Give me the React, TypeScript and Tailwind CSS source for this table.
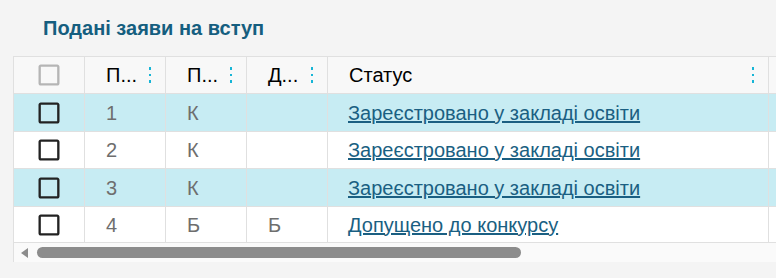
const rows = [
  { n: "1", a: "К", b: "", status: "Зареєстровано у закладі освіти", hl: true, h: "h-[38px]" },
  { n: "2", a: "К", b: "", status: "Зареєстровано у закладі освіти", hl: false, h: "h-[37px]" },
  { n: "3", a: "К", b: "", status: "Зареєстровано у закладі освіти", hl: true, h: "h-[38px]" },
  { n: "4", a: "Б", b: "Б", status: "Допущено до конкурсу", hl: false, h: "h-[36px]" },
];

const cols = "grid grid-cols-[71px_81px_81px_81px_441px_200px]";

const Checkbox = ({ muted }: { muted?: boolean }) => (
  <svg width="28" height="28" viewBox="0 0 24 24" className={muted ? "text-[#b5b5b5]" : "text-[#222222]"}>
    <path
      fill="currentColor"
      d="M19 5v14H5V5h14m0-2H5c-1.11 0-2 .9-2 2v14c0 1.1.89 2 2 2h14c1.1 0 2-.9 2-2V5c0-1.1-.9-2-2-2z"
    />
  </svg>
);

const Kebab = () => (
  <span className="flex flex-col gap-[4px]">
    <span className="w-[2.5px] h-[2.5px] bg-[#17b5d6]" />
    <span className="w-[2.5px] h-[2.5px] bg-[#17b5d6]" />
    <span className="w-[2.5px] h-[2.5px] bg-[#17b5d6]" />
  </span>
);

const HeadCell = ({ label }: { label: string }) => (
  <div className="flex items-center justify-between pl-[21px] pr-[14px] border-r border-[#e0e0e0]">
    <span className="text-black">{label}</span>
    <Kebab />
  </div>
);

export default function App() {
  return (
    <div className="w-[776px] h-[278px] overflow-hidden bg-[#f4f4f4] font-['Liberation_Sans',Arial,sans-serif] text-[20px]">
      <h2 className="mt-[17px] ml-[43px] h-[22px] leading-[22px] text-[20px] font-bold text-[#155e7f]">
        Подані заяви на вступ
      </h2>
      <div className="mt-[17px] ml-[13px] w-[763px] overflow-hidden border-l border-t border-[#e0e0e0]">
        <div className={`${cols} h-[37px] bg-[#f8f8f8] border-b border-[#e0e0e0]`}>
          <div className="flex items-center justify-center border-r border-[#e0e0e0]">
            <Checkbox muted />
          </div>
          <HeadCell label="П..." />
          <HeadCell label="П..." />
          <HeadCell label="Д..." />
          <HeadCell label="Статус" />
          <div className="border-r border-[#e0e0e0]" />
        </div>
        {rows.map((r) => (
          <div
            key={r.n}
            className={`${cols} ${r.h} border-b border-[#e0e0e0] ${r.hl ? "bg-[#c7ecf3]" : "bg-white"}`}
          >
            <div className="flex items-center justify-center border-r border-[#e0e0e0]">
              <Checkbox />
            </div>
            <div className="flex items-center pl-[21px] border-r border-[#e0e0e0] text-[#6e6e6e]">{r.n}</div>
            <div className="flex items-center pl-[21px] border-r border-[#e0e0e0] text-[#6e6e6e]">{r.a}</div>
            <div className="flex items-center pl-[21px] border-r border-[#e0e0e0] text-[#6e6e6e]">{r.b}</div>
            <div className="flex items-center pl-[20px] border-r border-[#e0e0e0]">
              <a href="#" className="text-[#1a5f82] underline">
                {r.status}
              </a>
            </div>
            <div className="border-r border-[#e0e0e0]" />
          </div>
        ))}
        <div className="h-[19px] bg-[#fafafa] flex items-center">
          <svg width="10" height="12" viewBox="0 0 10 12" className="ml-[5px]">
            <path d="M9 1 L2 6 L9 11 Z" fill="#8c8c8c" />
          </svg>
          <div className="ml-[8px] w-[484px] h-[11px] rounded-full bg-[#8c8c8c]" />
        </div>
      </div>
    </div>
  );
}
